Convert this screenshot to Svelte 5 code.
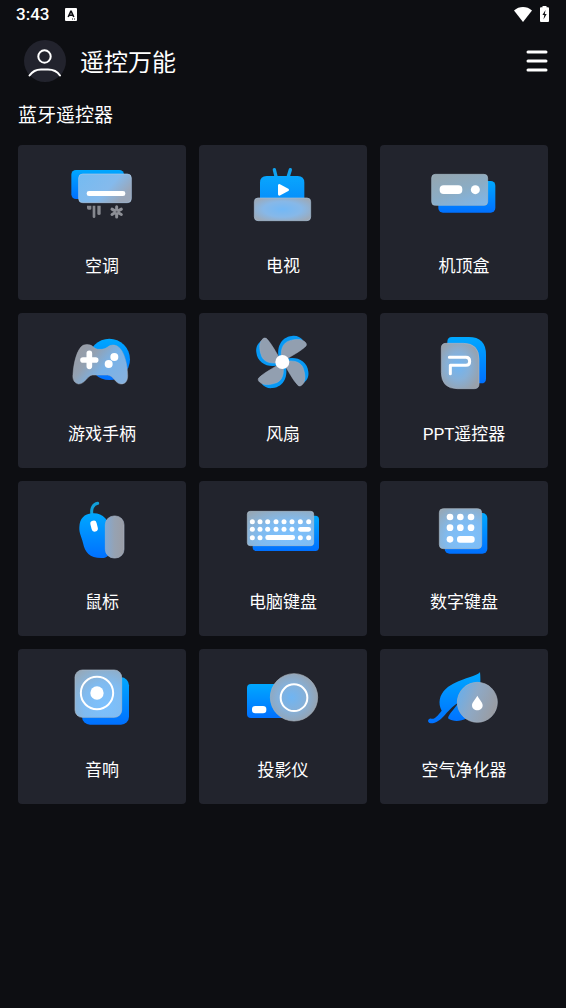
<script>
  const devices = [
    { id: 'ac', name: '空调', box: '0 0 300 240' },
    { id: 'tv', name: '电视', box: '3 0 300 240' },
    { id: 'stb', name: '机顶盒', box: '3 0 300 240' },
    { id: 'gamepad', name: '游戏手柄', box: '0 -6 300 240' },
    { id: 'fan', name: '风扇', box: '3 -6 300 240' },
    { id: 'ppt', name: 'PPT遥控器', box: '3 -6 300 240' },
    { id: 'mouse', name: '鼠标', box: '0 -12 300 240' },
    { id: 'keyboard', name: '电脑键盘', box: '3 -12 300 240' },
    { id: 'numpad', name: '数字键盘', box: '546 -12 300 240' },
    { id: 'speaker', name: '音响', box: '0 -3 300 240' },
    { id: 'projector', name: '投影仪', box: '3 -3 300 240' },
    { id: 'purifier', name: '空气净化器', box: '546 -3 300 240' }
  ];

  const keyColumns = [61, 84, 107, 132, 156, 180, 205, 230];
  const blades = [0, 90, 180, 270];
</script>

<!-- shared gradients -->
<svg class="defs" aria-hidden="true">
  <defs>
    <linearGradient id="blue" x1="0" y1="0" x2="0" y2="1">
      <stop offset="0" stop-color="#00a8ff" />
      <stop offset="1" stop-color="#0070ff" />
    </linearGradient>
    <linearGradient id="sky" x1="0" y1="0" x2="0" y2="1">
      <stop offset="0" stop-color="#08a6fd" />
      <stop offset="1" stop-color="#078ffb" />
    </linearGradient>
    <linearGradient id="glassLeft" x1="0" y1="0" x2="1" y2="0.5">
      <stop offset="0" stop-color="#74bbf2" />
      <stop offset="0.65" stop-color="#85baec" />
      <stop offset="1" stop-color="#9aa6b8" />
    </linearGradient>
    <linearGradient id="glassDisc" x1="0" y1="0.3" x2="1" y2="0.7">
      <stop offset="0" stop-color="#6aaeea" />
      <stop offset="0.4" stop-color="#8ea9c6" />
      <stop offset="1" stop-color="#9b9b9f" />
    </linearGradient>
    <linearGradient id="glassRight" x1="0" y1="0.2" x2="1" y2="0.8">
      <stop offset="0" stop-color="#989ba3" />
      <stop offset="0.3" stop-color="#93a1b2" />
      <stop offset="0.6" stop-color="#78b2e8" />
      <stop offset="1" stop-color="#86b2e0" />
    </linearGradient>
    <radialGradient id="glassCenter" cx="0.5" cy="0.5" r="0.62">
      <stop offset="0" stop-color="#72b8f6" />
      <stop offset="0.55" stop-color="#87b8e8" />
      <stop offset="1" stop-color="#9da9b7" />
    </radialGradient>
    <radialGradient id="glassRound" cx="0.45" cy="0.5" r="0.6">
      <stop offset="0" stop-color="#6fb5f3" />
      <stop offset="0.5" stop-color="#86b0d8" />
      <stop offset="1" stop-color="#98a1ab" />
    </radialGradient>
    <radialGradient id="glassCorner" cx="0.65" cy="0.75" r="0.95">
      <stop offset="0" stop-color="#7cc1fe" />
      <stop offset="0.5" stop-color="#80bbf0" />
      <stop offset="1" stop-color="#97a7b4" />
    </radialGradient>
    <linearGradient id="glassBox" x1="0.2" y1="0" x2="0.8" y2="1">
      <stop offset="0" stop-color="#94a7b2" />
      <stop offset="0.5" stop-color="#8bacc4" />
      <stop offset="1" stop-color="#80b5e5" />
    </linearGradient>
    <linearGradient id="glassGray" x1="0" y1="0" x2="1" y2="0">
      <stop offset="0" stop-color="#83a9d3" />
      <stop offset="0.5" stop-color="#96a2b2" />
      <stop offset="1" stop-color="#9b9da5" />
    </linearGradient>
  </defs>
</svg>

<div class="page">
  <div class="status">
    <span class="time">3:43</span>
    <svg class="badge" width="12" height="13" viewBox="0 0 12 13" aria-hidden="true">
      <rect width="12" height="13" rx="1" fill="#fff" />
      <path d="M3.2 9 5.8 3.4h.4L8.8 9M4.4 7.2h3.2" fill="none" stroke="#111217" stroke-width="1.6" />
      <path d="M7 11h3" stroke="#111217" stroke-width="1" stroke-dasharray="1 1" />
    </svg>
    <svg class="wifi" width="18" height="15" viewBox="0 0 18 15" aria-hidden="true">
      <path d="M0 3.4C5.2-1.1 12.8-1.1 18 3.4L9 15Z" fill="#fff" />
    </svg>
    <svg width="9" height="16" viewBox="0 0 9 16" aria-hidden="true">
      <path d="M2.5 0h4v1.2H8q1 0 1 1V15q0 1-1 1H1q-1 0-1-1V2.200q0-1 1-1h1.500Z" fill="#fff" />
      <path d="M5.500 4 2.400 9h1.900l-.8 4.500L6.700 8H4.800Z" fill="#111217" />
    </svg>
  </div>

  <header>
    <button class="avatar" aria-label="我的">
      <svg width="42" height="42" viewBox="0 0 42 42" fill="none" stroke="#fff" stroke-width="2" stroke-linecap="round">
        <circle cx="20.500" cy="16.500" r="6.200" />
        <path d="M5.500 35.500C9 30.500 12.500 29.500 17 29.500h7C29 29.500 33 31 36 35.500" />
      </svg>
    </button>
    <h1>遥控万能</h1>
    <button class="menu" aria-label="菜单">
      <svg width="22" height="22" viewBox="0 0 22 22" stroke="#fff" stroke-width="3" stroke-linecap="round">
        <path d="M2 2h18M2 11h18M2 20h18" />
      </svg>
    </button>
  </header>

  <main>
    <h2>蓝牙遥控器</h2>
    <div class="grid">
      {#each devices as device (device.id)}
        <button class="card">
          <svg class="icon" viewBox={device.box} aria-hidden="true">
            {#if device.id === 'ac'}
              <rect x="58" y="60" width="158" height="87" rx="14" fill="url(#blue)" />
              <rect x="80" y="72" width="158" height="86" rx="12" fill="url(#glassLeft)" stroke="#adc9e6" stroke-width="2" />
              <rect x="104" y="123" width="116" height="15" rx="7" fill="#fff" />
              <g fill="#85878e">
                <path d="M105 167h13v9q0 3-4 3h-4q-5 0-5-5Z" />
                <path d="M122 167h8v33q0 4-4 4t-4-4Z" />
                <path d="M136 167h10v24q0 4-5 4t-5-4Z" />
              </g>
              <path
                d="M194 170v31M180 177.500l28 16M208 177.500l-28 16"
                stroke="#8d8f96" stroke-width="9" stroke-linecap="round" />
              <circle cx="194" cy="185.500" r="3" fill="#60626a" />
            {:else if device.id === 'tv'}
              <path d="m127 59 5 20M175 59l-6 20" stroke="#11a2ee" stroke-width="10" stroke-linecap="round" />
              <path d="M84 150V98q0-20 20-20h93q20 0 20 20v52Z" fill="url(#sky)" />
              <path d="M142 106v27l25-13.500Z" fill="#fff" stroke="#fff" stroke-width="8" stroke-linejoin="round" />
              <rect x="67" y="144" width="169" height="68" rx="11" fill="url(#glassCenter)" stroke="#a9bfd6" stroke-width="2" />
            {:else if device.id === 'stb'}
              <rect x="76" y="93" width="171" height="95" rx="14" fill="url(#blue)" />
              <rect x="56" y="73" width="168" height="93" rx="11" fill="url(#glassBox)" stroke="#a5b9c7" stroke-width="2" />
              <rect x="80" y="106" width="68" height="26" rx="12" fill="#fff" />
              <circle cx="187" cy="119" r="13.500" fill="#fff" />
            {:else if device.id === 'gamepad'}
              <circle cx="172" cy="118" r="62" fill="url(#blue)" />
              <path
                d="M93 76C104 72 116 73 124 81Q130 87 137 88H150Q160 87 166 82C175 74 188 73 198 80C216 91 226 132 227 164C228 181 221 192 207 192C190 192 184 165 167 165H122C107 165 99 192 80 192C67 190 61 178 63 163C65 129 75 87 93 76Z"
                fill="url(#glassRight)" stroke="#a5adb9" stroke-width="1.500" />
              <path d="M112 100v39M93 120h38" stroke="#fff" stroke-width="17" stroke-linecap="round" />
              <circle cx="187" cy="111" r="12" fill="#fff" />
              <circle cx="170" cy="132" r="12" fill="#fff" />
            {:else if device.id === 'fan'}
              {#each blades as angle}
                <g transform="rotate({angle} 151 126)">
                  <path d="M142 117C132 87 145 51 180 48C194 46 204 51 213 61L156 124Z" fill="#0799f5" />
                </g>
              {/each}
              {#each blades as angle}
                <g transform="rotate({angle} 151 126)">
                  <path d="M151 126C142 91 152 67 174 62C187 58 204 56 214 62Q227 70 222 78C204 96 179 106 151 126Z" fill="#929fb0" stroke="#a3afc0" stroke-width="1.500" />
                </g>
              {/each}
              <circle cx="151" cy="126" r="21" fill="#fff" />
            {:else if device.id === 'ppt'}
              <path d="M117 51H167Q219 51 219 104V176Q219 190 204 190H150Q103 190 103 140V66Q103 51 117 51Z" fill="url(#blue)" />
              <path d="M99 70H151Q198 70 198 118V192Q198 206 184 206H133Q85 206 85 157V84Q85 70 99 70Z" fill="url(#glassRound)" stroke="#a9b5c5" stroke-width="2" />
              <path d="M109 112H159Q170 112 170 124Q170 136 159 136H112V161" fill="none" stroke="#fff" stroke-width="9" stroke-linecap="round" stroke-linejoin="round" />
            {:else if device.id === 'mouse'}
              <path d="M120 76C116 55 124 42 137 40" fill="none" stroke="#11a0da" stroke-width="9" stroke-linecap="round" />
              <path d="M120 70C149 67 172 87 180 128C185 164 179 203 151 204C113 205 99 187 93 159C88 139 81 130 82 112C83 85 97 72 120 70Z" fill="url(#blue)" />
              <rect x="117" y="92" width="19" height="33" rx="9" fill="#fff" transform="rotate(-14 126 109)" />
              <rect x="160" y="78" width="56" height="126" rx="26" fill="url(#glassGray)" stroke="#a4b1c4" stroke-width="2" />
            {:else if device.id === 'keyboard'}
              <rect x="62" y="77" width="199" height="106" rx="11" fill="url(#blue)" />
              <rect x="46" y="64" width="199" height="103" rx="9" fill="url(#glassCorner)" stroke="#acc0cf" stroke-width="2" />
              <g fill="#fff">
                {#each keyColumns as x, i}
                  <circle cx={x} cy="95" r="7.500" />
                  {#if i < 6}
                    <circle cx={x} cy="118" r="7.500" />
                  {/if}
                  {#if i < 2 || i > 5}
                    <circle cx={x} cy="143" r="7.500" />
                  {/if}
                {/each}
                <rect x="198" y="111" width="39" height="14" rx="7" />
                <rect x="100" y="135" width="89" height="15" rx="7" />
              </g>
            {:else if device.id === 'numpad'}
              <rect x="638" y="69" width="128" height="122" rx="15" fill="url(#blue)" />
              <rect x="622" y="56" width="127" height="120" rx="12" fill="url(#glassCorner)" stroke="#abb9c5" stroke-width="2" />
              <g fill="#fff">
                {#each [654, 685, 717] as x}
                  <circle cx={x} cy="81" r="10" />
                  <circle cx={x} cy="113" r="10" />
                {/each}
                <circle cx="654" cy="148" r="10" />
                <rect x="675" y="138" width="53" height="20" rx="9" />
              </g>
            {:else if device.id === 'speaker'}
              <rect x="90" y="67" width="141" height="142" rx="24" fill="url(#blue)" />
              <rect x="69" y="45" width="140" height="142" rx="22" fill="url(#glassCorner)" stroke="#acbccc" stroke-width="2" />
              <circle cx="135" cy="114" r="48.500" fill="none" stroke="#fff" stroke-width="6" />
              <circle cx="135" cy="114" r="20" fill="#fff" />
            {:else if device.id === 'projector'}
              <rect x="45" y="87" width="165" height="102" rx="12" fill="url(#blue)" />
              <rect x="60" y="153" width="43" height="22" rx="10" fill="#fff" />
              <circle cx="186" cy="127" r="71" fill="url(#glassRound)" stroke="#abb3bd" stroke-width="2" />
              <circle cx="186" cy="128" r="40" fill="none" stroke="#fff" stroke-width="6" />
            {:else}
              <path
                d="M744 51C734 66 678 70 642 101C622 119 617 144 629 167C616 183 608 194 598 191C587 189 584 204 596 205C629 206 643 164 678 144C670 160 650 176 648 190C663 201 684 201 704 190C734 174 750 111 744 51Z"
                fill="url(#blue)" />
              <circle cx="736" cy="142" r="60" fill="url(#glassDisc)" stroke="#a7b2bf" stroke-width="2" />
              <path d="M736 122C731 132 720 142 720 151C720 171 752 171 752 151C752 142 741 132 736 122Z" fill="#fff" />
            {/if}
          </svg>
          <span>{device.name}</span>
        </button>
      {/each}
    </div>
  </main>
</div>

<style>
  :global(body) {
    margin: 0;
    background: #0d0e12;
  }

  .defs {
    position: absolute;
    width: 0;
    height: 0;
  }

  .page {
    color: #fff;
    font-family: 'Roboto', 'Noto Sans', 'Noto Sans CJK SC', sans-serif;
  }

  button {
    border: 0;
    padding: 0;
    background: none;
    color: inherit;
    font: inherit;
    cursor: pointer;
  }

  svg {
    display: block;
  }

  .status {
    display: flex;
    align-items: center;
    height: 28px;
    padding: 0 17px 0 16px;
  }

  .time {
    font-size: 17px;
    font-weight: 500;
    line-height: 28px;
  }

  .badge {
    margin-left: 16px;
  }

  .wifi {
    margin-left: auto;
    margin-right: 8px;
  }

  header {
    display: flex;
    align-items: center;
    height: 66px;
    padding: 0 18px 0 24px;
  }

  .avatar {
    border-radius: 50%;
    background: #22232d;
  }

  h1 {
    flex: 1;
    margin: 0;
    padding: 4px 0 0 14px;
    font-size: 24px;
    font-weight: 400;
    line-height: 32px;
  }

  main {
    padding: 8px 18px 24px;
  }

  h2 {
    margin: 0 0 15px;
    font-size: 19px;
    font-weight: 400;
    line-height: 28px;
  }

  .grid {
    display: grid;
    grid-template-columns: repeat(3, 1fr);
    gap: 13px;
  }

  .card {
    display: flex;
    flex-direction: column;
    align-items: center;
    padding: 5px 0 22px;
    border-radius: 4px;
    background: #22242d;
  }

  .icon {
    width: 100px;
    height: 80px;
    margin-bottom: 24px;
  }

  .card span {
    font-size: 17px;
    line-height: 24px;
  }
</style>
